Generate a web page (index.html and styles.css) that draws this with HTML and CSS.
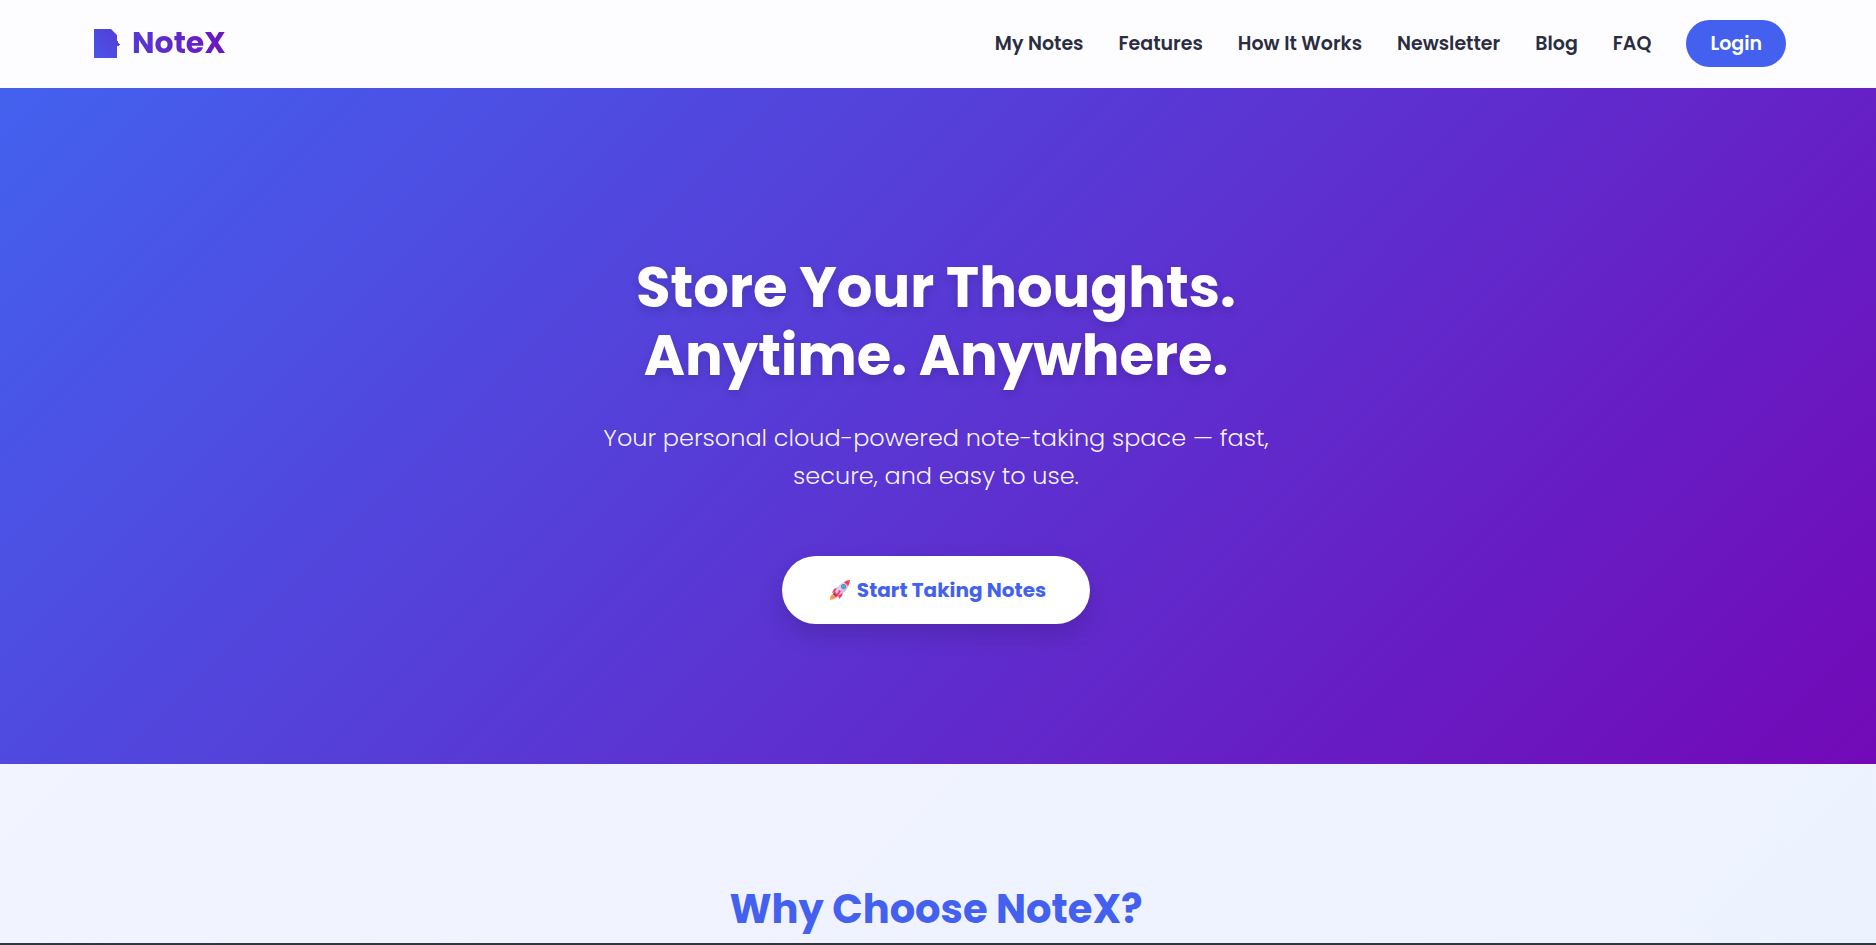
FILE: index.html
```html
<!DOCTYPE html>
<html lang="en">
<head>
<meta charset="utf-8">
<meta name="viewport" content="width=device-width, initial-scale=1">
<title>NoteX</title>
<link rel="stylesheet" href="styles.css">
</head>
<body>
<header class="site-header">
  <a class="logo" href="#">
    <svg class="logo-icon" viewBox="0 0 26 29" aria-hidden="true">
      <defs>
        <linearGradient id="logo-fill" x1="0" y1="1" x2="1" y2="0">
          <stop offset="0" stop-color="#4856e6"/>
          <stop offset="1" stop-color="#553cd6"/>
        </linearGradient>
      </defs>
      <path fill="url(#logo-fill)" d="M0 0h17l6 6v6h1v2h1v1h1v1h-1v1h-2v12H0z"/>
    </svg>
    <span class="logo-text">NoteX</span>
  </a>
  <nav class="nav">
    <a class="nav-link" href="#notes">My Notes</a>
    <a class="nav-link" href="#features">Features</a>
    <a class="nav-link" href="#how">How It Works</a>
    <a class="nav-link" href="#newsletter">Newsletter</a>
    <a class="nav-link" href="#blog">Blog</a>
    <a class="nav-link" href="#faq">FAQ</a>
    <a class="login" href="#login">Login</a>
  </nav>
</header>
<main class="main">
  <section class="hero">
    <h1 class="hero-title">Store Your Thoughts.<br>Anytime. Anywhere.</h1>
    <p class="hero-text">Your personal cloud-powered note-taking space — fast,<br>secure, and easy to use.</p>
    <button class="cta" type="button">
      <svg class="rocket" viewBox="0 0 20 20" aria-hidden="true">
        <path fill="#ff9838" d="M3 14l3 3-2 2-4 1 .5-4z"/>
        <path fill="#f8386e" d="M8 7L4 9l-2 4 4-1zM13 12l-1 4-3 3-1-5z"/>
        <path fill="#f8386e" d="M5 11l4 4-3 2-3-3z"/>
        <path fill="#5d4a86" d="M4 13l3 3-1 1-3-3z"/>
        <path fill="#dcd3e4" d="M5 12Q8 3 17 1l2 2q-1 9-10 12z"/>
        <path fill="#b9aac6" d="M7 14L19 3q-1 9-10 12z" opacity=".4"/>
        <path fill="#fa3b5b" d="M14 2q3-2 6-2 0 3-2 6z"/>
        <circle cx="13.500" cy="6.500" r="2.500" fill="#5f7eb0"/>
        <circle cx="13.500" cy="6.500" r="1.700" fill="#50a9ef"/>
        <path fill="#fa376b" d="M9 10l2 1-4 6-2 1z"/>
      </svg>
      <span>Start Taking Notes</span>
    </button>
  </section>
  <section class="features" id="features">
    <h2 class="features-title">Why Choose NoteX?</h2>
  </section>
</main>
</body>
</html>
```
FILE: styles.css
```css
* { box-sizing: border-box; }

body {
  display: flex;
  flex-direction: column;
  min-height: 100vh;
  margin: 0;
  font-family: Poppins, Inter, "Open Sans", sans-serif;
  color: #2b2d42;
  border-bottom: 2px solid #34363c;
}

a { color: inherit; text-decoration: none; }

.site-header {
  display: flex;
  align-items: center;
  justify-content: space-between;
  padding: 19px 90px 21px 94px;
  background: #fdfdff;
}

.logo { display: flex; align-items: center; gap: 12px; }
.logo-icon { width: 26px; height: 29px; }
.logo-text {
  font-size: 30px;
  line-height: 48px;
  font-weight: 700;
  background: linear-gradient(90deg, #5639d4, #6c15bd);
  -webkit-background-clip: text;
  background-clip: text;
  color: transparent;
}

.nav { display: flex; align-items: center; gap: 35px; }
.nav-link, .login { font-size: 19px; line-height: 23px; font-weight: 600; }
.login {
  padding: 12px 24px;
  border-radius: 32px;
  background: #4361ee;
  color: #fff;
}

.main { flex: 1; display: flex; flex-direction: column; }

.hero {
  display: flex;
  flex-direction: column;
  align-items: center;
  padding: 166px 24px 140px 20px;
  background: linear-gradient(135deg, #4361ee, #7209b7);
  color: #fff;
  text-align: center;
}
.hero-title {
  margin: 0 0 29px;
  font-size: 56px;
  line-height: 68px;
  font-weight: 700;
  text-shadow: 0 4px 10px rgba(0, 0, 0, 0.15);
}
.hero-text {
  margin: 0 0 61px;
  font-size: 24px;
  line-height: 38px;
  font-weight: 300;
  color: rgba(255, 255, 255, 0.95);
}
.cta {
  display: flex;
  align-items: center;
  gap: 7px;
  padding: 20px 44px 20px 48px;
  border: 0;
  border-radius: 40px;
  background: #fff;
  box-shadow: 0 10px 25px rgba(0, 0, 0, 0.15);
  color: #4361ee;
  font-family: inherit;
  font-size: 20px;
  line-height: 28px;
  font-weight: 700;
}
.rocket { width: 20px; height: 20px; }

.features {
  flex: 1;
  padding: 115px 24px 4px 20px;
  background: linear-gradient(135deg, #f2f4ff, #edf2ff);
  text-align: center;
}
.features-title {
  margin: 0;
  font-size: 40px;
  line-height: 60px;
  font-weight: 700;
  color: #4361ee;
}
```
